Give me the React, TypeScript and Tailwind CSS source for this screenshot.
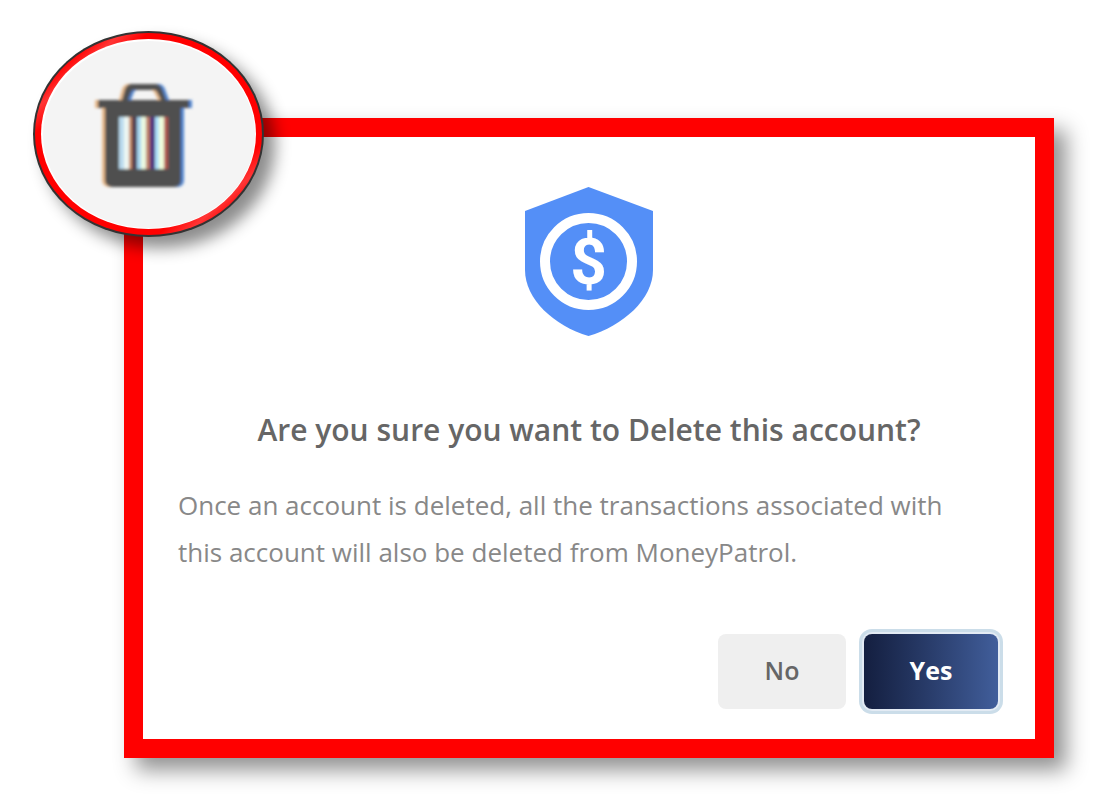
import { useState } from "react";

// trash can outline, lid and handle; the slots are cut out with evenodd
const TRASH_PATH =
  "M98 100 H122 L125 89 Q127 84 132 84 H155 Q160 84 162 89 L166 100 H189 V108 H181 V180 Q181 187 174 187 H113 Q105 187 105 180 V108 H98 Z M128 100 H161 L157 92 Q156 90 154 90 H134 Q132 90 131 92 Z M119 117 V169 H167 V117 Z";

function TrashBadge() {
  return (
    <svg
      viewBox="33 31 231 206"
      className="w-[231px] h-[206px] overflow-visible drop-shadow-[11px_11px_8px_rgba(0,0,0,0.45)]"
      aria-hidden="true"
    >
      <defs>
        <linearGradient id="rim" x1="0" y1="0" x2="1" y2="1">
          <stop offset="0" stopColor="#ff0000" />
          <stop offset="0.14" stopColor="#ff0000" />
          <stop offset="0.19" stopColor="#ff3535" />
          <stop offset="0.25" stopColor="#ff0000" />
          <stop offset="0.77" stopColor="#ff0000" />
          <stop offset="0.83" stopColor="#ff3535" />
          <stop offset="0.88" stopColor="#ff0000" />
        </linearGradient>
        <filter id="soft" x="-10%" y="-10%" width="120%" height="120%">
          <feGaussianBlur stdDeviation="1.5" />
        </filter>
      </defs>

      <ellipse cx="148.500" cy="134" rx="115.500" ry="103" fill="#333333" />
      <ellipse cx="148.500" cy="134" rx="113.500" ry="101" fill="url(#rim)" />
      <ellipse cx="148.500" cy="134" rx="107.500" ry="95" fill="#ffffff" />
      <ellipse cx="149" cy="134.500" rx="106" ry="93.500" fill="#f4f4f4" />

      <g filter="url(#soft)" fillRule="evenodd">
        <path d={TRASH_PATH} fill="#e8b98a" transform="translate(-3 0)" />
        <path d={TRASH_PATH} fill="#4f84d0" transform="translate(3 0)" />
        <path d={TRASH_PATH} fill="#505050" />
        <rect x="119" y="117" width="5" height="52" fill="#b9daee" />
        <rect x="124" y="117" width="5" height="52" fill="#eef8f4" />
        <rect x="129" y="117" width="3" height="52" fill="#c98a62" />
        <rect x="132" y="117" width="5" height="52" fill="#4e3a50" />
        <rect x="137" y="117" width="4" height="52" fill="#a5d5f2" />
        <rect x="141" y="117" width="5" height="52" fill="#ebfae2" />
        <rect x="146" y="117" width="4" height="52" fill="#bd7a62" />
        <rect x="150" y="117" width="5" height="52" fill="#4b2c7c" />
        <rect x="155" y="117" width="4" height="52" fill="#aee0fa" />
        <rect x="159" y="117" width="5" height="52" fill="#f2ffdc" />
        <rect x="164" y="117" width="4" height="52" fill="#b0544e" />
      </g>
    </svg>
  );
}

function ShieldLogo() {
  return (
    <svg viewBox="0 0 128 149" className="w-32 h-[149px]" aria-hidden="true">
      <path
        d="M63.500 0 L128 24 V83 C128 112 98 139 63.500 149 C29 139 0 112 0 83 V24 Z"
        fill="#548ff7"
      />
      <circle cx="63.500" cy="74.500" r="43.500" fill="none" stroke="#ffffff" strokeWidth="10" />
      <text
        x="63.500"
        y="97"
        textAnchor="middle"
        fill="#ffffff"
        fontSize="64"
        fontWeight="700"
        fontFamily="Roboto, sans-serif"
      >
        $
      </text>
    </svg>
  );
}

export default function App() {
  const [open, setOpen] = useState(true);

  const handleClose = () => setOpen(false);

  if (!open) return null;

  return (
    <div className="min-h-screen bg-white pt-[118px] pl-[124px] pr-[39px] pb-10 font-['Open_Sans',sans-serif]">
      <div
        role="dialog"
        aria-labelledby="titulo"
        aria-describedby="texto"
        className="relative border-[19px] border-[#ff0000] bg-white pt-[50px] pb-[30px] shadow-[12px_12px_20px_rgba(0,0,0,0.43)]"
      >
        <div className="absolute -top-[106px] -left-[110px]">
          <TrashBadge />
        </div>

        <div className="flex justify-center">
          <ShieldLogo />
        </div>

        <h1
          id="titulo"
          className="mt-[74px] text-center text-[30px] leading-10 font-semibold text-[#666666]"
        >
          Are you sure you want to Delete this account?
        </h1>

        <p id="texto" className="mt-8 px-[35px] text-[26px] leading-[47px] text-[#888888]">
          Once an account is deleted, all the transactions associated with{" "}
          <br />
          this account will also be deleted from MoneyPatrol.
        </p>

        <div className="mt-[58px] flex justify-end gap-[18px] pr-[37px] text-[25px]">
          <button
            type="button"
            onClick={handleClose}
            className="h-[75px] w-32 rounded-lg bg-[#efefef] pb-0.5 font-semibold text-[#666666]"
          >
            No
          </button>
          <button
            type="button"
            onClick={handleClose}
            className="h-[75px] w-[134px] rounded-lg bg-linear-to-r from-[#141f40] to-[#415e9b] pb-0.5 font-bold text-white shadow-[0_0_0_2px_#e3ebf4,0_0_0_5px_#cbdde9]"
          >
            Yes
          </button>
        </div>
      </div>
    </div>
  );
}
